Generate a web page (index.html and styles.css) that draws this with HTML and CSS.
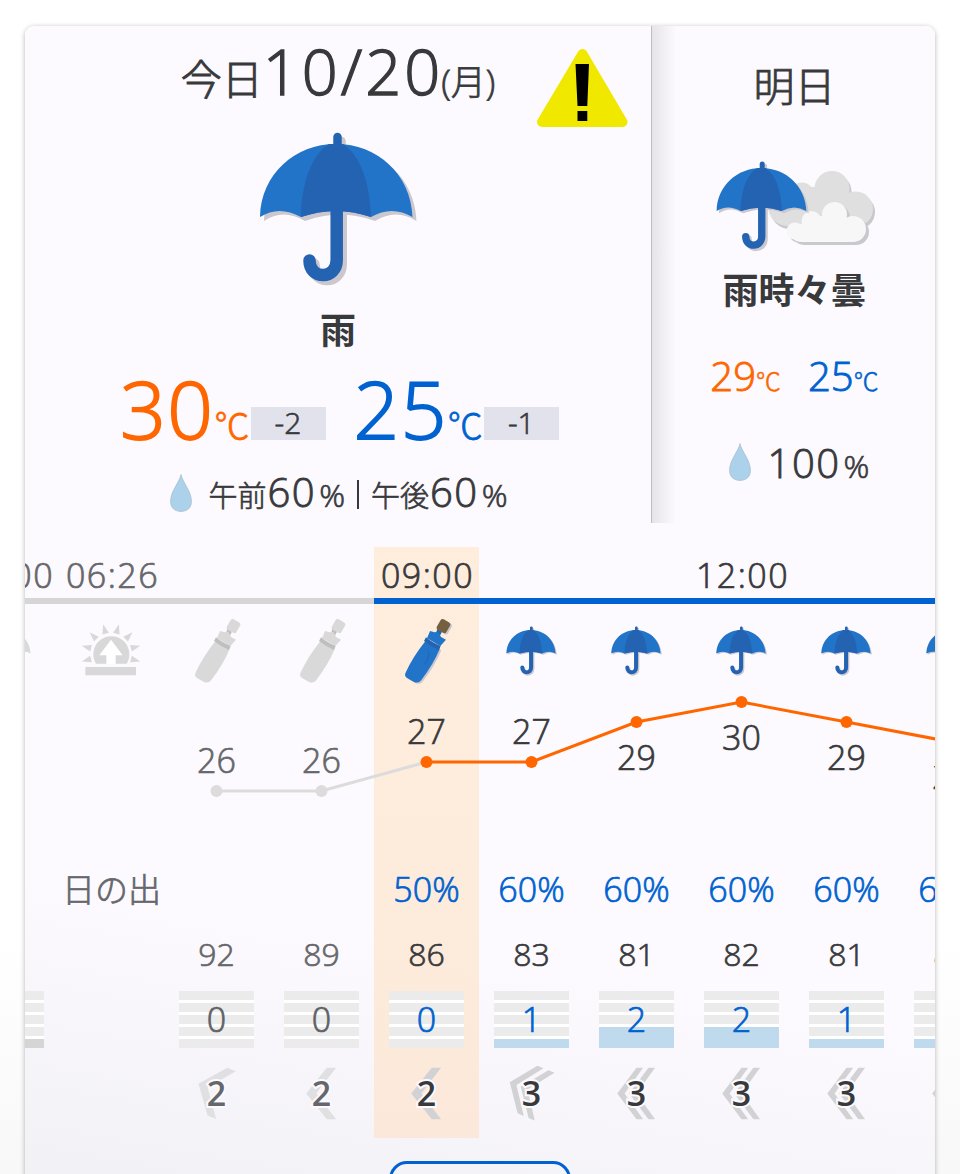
FILE: index.html
```html
<!DOCTYPE html>
<html lang="ja">
    <head>
        <meta charset="UTF-8">
        <title>今日・明日の天気</title>
        <link rel="stylesheet" href="styles.css">
    </head>
    <body>
        <svg class="defs">
            <symbol id="umbrella" viewBox="0 0 158 154">
                <g class="shade" transform="translate(4 4)">
                    <path d="M1 85C2 42 36 12 77 12S152 42 153.500 85Q133 72 112 85Q77 72 42 85Q20 72 1 85z"/>
                    <path class="stick" d="M78.500 16V5"/>
                    <path class="pole" d="M77.700 78V128C77.700 148 50.500 148 50.500 128.500"/>
                </g>
                <path class="canopy" d="M1 85C2 42 36 12 77 12S152 42 153.500 85Q133 73 112 85Q77 73 42 85Q20 73 1 85z"/>
                <path class="rib" d="M42 85C42 55 52 22 70 12H84C102 24 111 52 112 85Q77 73 42 85z"/>
                <path class="stick" d="M78.500 16V5"/>
                <path class="pole" d="M77.700 78V128C77.700 148 50.500 148 50.500 128.500"/>
            </symbol>
            <symbol id="folded" viewBox="120 230 159 210">
                <g class="shade" transform="translate(5 4)">
                    <path d="M136 399Q158 350 196 303L239 326Q220 372 184 419Q176 430 162 425L140 412Q133 408 136 399z"/>
                    <rect x="234" y="239" width="33" height="36" rx="7" transform="rotate(30 250 257)"/>
                </g>
                <path class="canopy" d="M136 399Q158 350 196 303L239 326Q220 372 184 419Q176 430 162 425L140 412Q133 408 136 399z"/>
                <path class="fold" d="M200 325Q213 340 191 374Q214 354 230 325Q218 348 201 362Q215 341 200 325z"/>
                <path class="rib" d="M232 266L246 274L238 289L227 281z"/>
                <path class="canopy" d="M210 272L224 276L235 274L243 290L258 298L241 317L201 294z"/>
                <path class="rib" d="M198 291Q215 306 242 317L237 329Q212 318 192 302z"/>
                <rect class="grip" x="234" y="239" width="33" height="36" rx="7" transform="rotate(30 250 257)"/>
            </symbol>
            <symbol id="drop" viewBox="0 0 22 38">
                <path d="M11 .5C13 9 21.500 17 21.500 27.500C21.500 34 17 37.500 11 37.500S.5 34 .5 27.500C.5 17 9 9 11 .5z"/>
            </symbol>
            <symbol id="wind1" viewBox="-80 -95 160 190">
                <path d="M-46 0L16-78H44L-16 0L44 78H16z"/>
            </symbol>
            <symbol id="wind2" viewBox="-80 -95 160 190">
                <path d="M-58 0L0-78H20L-36 0L20 78H0z"/>
                <path d="M-22 0L36-78H56L0 0L56 78H36z"/>
            </symbol>
        </svg>

        <div class="card">
            <div class="days">
                <section class="today">
                    <h2 class="date"><span class="label">今日</span><span class="num">10/20</span><span class="wday">(月)</span></h2>
                    <svg class="alert" viewBox="0 0 91 79">
                        <path class="alert-bg" d="M45.500 5L85.500 73H5z"/>
                        <path d="M38.500 15H52L50.300 57H40.500zM40.500 62H50.300V72H40.500z"/>
                    </svg>
                    <svg class="main-icon"><use href="#umbrella"/></svg>
                    <p class="weather">雨</p>
                    <div class="temps">
                        <span class="high">30</span><span class="unit high">℃</span><span class="diff">-2</span>
                        <span class="low">25</span><span class="unit low">℃</span><span class="diff">-1</span>
                    </div>
                    <div class="rain">
                        <svg class="drop"><use href="#drop"/></svg>
                        <span class="half">午前</span><span class="pct">60</span><span class="sign">%</span>
                        <span class="bar"></span>
                        <span class="half">午後</span><span class="pct">60</span><span class="sign">%</span>
                    </div>
                </section>
                <section class="tomorrow">
                    <h2 class="date">明日</h2>
                    <svg class="main-icon" viewBox="0 0 158 92">
                        <g class="cloud-shade" transform="translate(2 3)">
                            <circle cx="116" cy="27.500" r="17.500"/><circle cx="139.500" cy="48" r="17.500"/><circle cx="86" cy="33" r="11.500"/><circle cx="72" cy="45" r="20"/>
                            <path d="M86 26H116L140 65H72z"/>
                        </g>
                        <g class="cloud-back">
                            <circle cx="116" cy="27.500" r="17.500"/><circle cx="139.500" cy="48" r="17.500"/><circle cx="86" cy="33" r="11.500"/><circle cx="72" cy="45" r="20"/>
                            <path d="M86 26H116L140 65H72z"/>
                        </g>
                        <g class="cloud-shade" transform="translate(3 3)">
                            <circle cx="118.500" cy="53.500" r="12.500"/><circle cx="95.500" cy="60" r="10"/><circle cx="137" cy="68" r="13"/><circle cx="79" cy="70" r="8.500"/>
                            <path d="M79 68L95 55H125L137 81H86Q79 81 75 76z"/>
                        </g>
                        <g class="cloud-front">
                            <circle cx="118.500" cy="53.500" r="12.500"/><circle cx="95.500" cy="60" r="10"/><circle cx="137" cy="68" r="13"/><circle cx="79" cy="70" r="8.500"/>
                            <path d="M79 68L95 55H125L137 81H86Q79 81 75 76z"/>
                        </g>
                        <use href="#umbrella" width="93" height="90.600"/>
                    </svg>
                    <p class="weather">雨時々曇</p>
                    <div class="temps">
                        <span class="high">29</span><span class="unit high">℃</span>
                        <span class="low">25</span><span class="unit low">℃</span>
                    </div>
                    <div class="rain">
                        <svg class="drop"><use href="#drop"/></svg>
                        <span class="pct">100</span><span class="sign">%</span>
                    </div>
                </section>
            </div>

            <div class="hourly">
                <div class="row time">
                    <span class="past">06:00</span><span class="past">06:26</span><span></span><span></span><span>09:00</span><span></span><span></span><span>12:00</span><span></span><span></span>
                </div>
                <div class="row line">
                    <i class="past"></i><i class="past"></i><i class="past"></i><i class="past"></i><i></i><i></i><i></i><i></i><i></i><i></i>
                </div>
                <div class="row icons">
                    <span class="past"><svg class="umb"><use href="#umbrella"/></svg></span>
                    <span>
                        <svg class="sunrise" viewBox="243 245 180 162">
                            <path d="M288 370A54 54 0 1 1 380 370z"/>
                            <g transform="translate(333 340)">
                                <path d="M-10-62H10L0-91z" transform="rotate(15)"/>
                                <path d="M-10-62H10L0-91z" transform="rotate(45)"/>
                                <path d="M-10-62H10L0-91z" transform="rotate(75)"/>
                                <path d="M-10-62H10L0-91z" transform="rotate(105)"/>
                                <path d="M-10-62H10L0-91z" transform="rotate(-15)"/>
                                <path d="M-10-62H10L0-91z" transform="rotate(-45)"/>
                                <path d="M-10-62H10L0-91z" transform="rotate(-75)"/>
                                <path d="M-10-62H10L0-91z" transform="rotate(-105)"/>
                            </g>
                            <path d="M256 380H408V405H256z"/>
                            <path class="arrow" d="M333 298L368 345H347V371H319V345H298z"/>
                        </svg>
                    </span>
                    <span class="past"><svg class="fold-icon"><use href="#folded"/></svg></span>
                    <span class="past"><svg class="fold-icon"><use href="#folded"/></svg></span>
                    <span><svg class="fold-icon"><use href="#folded"/></svg></span>
                    <span><svg class="umb"><use href="#umbrella"/></svg></span>
                    <span><svg class="umb"><use href="#umbrella"/></svg></span>
                    <span><svg class="umb"><use href="#umbrella"/></svg></span>
                    <span><svg class="umb"><use href="#umbrella"/></svg></span>
                    <span><svg class="umb"><use href="#umbrella"/></svg></span>
                </div>
                <!-- 気温グラフ 1列=105 -->
                <svg class="chart" viewBox="0 0 1050 164">
                    <polyline class="old" points="262.500,97 367.500,97 472.500,68"/>
                    <g class="old"><circle cx="262.500" cy="97" r="6"/><circle cx="367.500" cy="97" r="6"/></g>
                    <polyline points="472.500,68 577.500,68 682.500,28 787.500,8 892.500,28 997.500,48"/>
                    <circle cx="472.500" cy="68" r="6"/><circle cx="577.500" cy="68" r="6"/><circle cx="682.500" cy="28" r="6"/><circle cx="787.500" cy="8" r="6"/><circle cx="892.500" cy="28" r="6"/><circle cx="997.500" cy="48" r="6"/>
                    <text class="past" x="262.500" y="79">26</text>
                    <text class="past" x="367.500" y="79">26</text>
                    <text x="472.500" y="50">27</text>
                    <text x="577.500" y="50">27</text>
                    <text x="682.500" y="76">29</text>
                    <text x="787.500" y="56">30</text>
                    <text x="892.500" y="76">29</text>
                    <text x="997.500" y="95">28</text>
                </svg>
                <div class="row prob">
                    <span></span><span class="past event">日の出</span><span></span><span></span><span>50%</span><span>60%</span><span>60%</span><span>60%</span><span>60%</span><span>60%</span>
                </div>
                <div class="row humid">
                    <span></span><span></span><span class="past">92</span><span class="past">89</span><span>86</span><span>83</span><span>81</span><span>82</span><span>81</span><span>80</span>
                </div>
                <div class="row fall">
                    <span class="past"><b class="lv1"></b></span><span></span>
                    <span class="past"><b>0</b></span><span class="past"><b>0</b></span><span><b>0</b></span><span><b class="lv1">1</b></span><span><b class="lv2">2</b></span><span><b class="lv2">2</b></span><span><b class="lv1">1</b></span><span><b class="lv1">1</b></span>
                </div>
                <div class="row wind">
                    <span></span><span></span>
                    <span class="past"><svg class="wnw"><use href="#wind1"/></svg><b>2</b></span>
                    <span class="past"><svg><use href="#wind1"/></svg><b>2</b></span>
                    <span><svg><use href="#wind1"/></svg><b>2</b></span>
                    <span><svg class="wnw"><use href="#wind2"/></svg><b>3</b></span>
                    <span><svg><use href="#wind2"/></svg><b>3</b></span>
                    <span><svg><use href="#wind2"/></svg><b>3</b></span>
                    <span><svg><use href="#wind2"/></svg><b>3</b></span>
                    <span><svg><use href="#wind2"/></svg><b>3</b></span>
                </div>
            </div>
            <div class="more"></div>
        </div>
    </body>
</html>
```
FILE: styles.css
```css
* {
    box-sizing:border-box;
    -webkit-text-stroke:.022em;
}
html {
    height:100%;
    overflow:hidden;
}
body {
    margin:0;
    height:1174px;
    padding:26px 25px 0;
    overflow:hidden;
    background:linear-gradient(#fff 940px, #f8f8f8);
    font-family:"Open Sans","Noto Sans CJK JP",sans-serif;
    font-weight:300;
    color:#38393b;
}
h2, p {
    margin:0;
    font-weight:inherit;
}
.defs {
    display:none;
}
.card {
    height:1200px;
    border-radius:9px;
    background:linear-gradient(10deg, #f1f0f5 2%, #fcfaff 26%);
    box-shadow:0 1px 5px rgba(0,0,0,.3);
    overflow:hidden;
}
.days {
    display:flex;
    height:497px;
}
.today, .tomorrow {
    display:flex;
    flex-direction:column;
    align-items:center;
}
.today {
    position:relative;
    width:626px;
}
.tomorrow {
    flex:1;
    padding-left:2px;
    border-left:1px solid #bfbdc2;
    background:linear-gradient(90deg, #e6e4e9, #fcfaff 24px);
}
.date, .temps, .rain {
    display:flex;
    align-items:baseline;
    white-space:nowrap;
}

/* アイコンの色 */
svg {
    --canopy:#2174c7;
    --rib:#2463b1;
    --shade:#cbc7cf;
    --grip:#75603f;
    --fold:#2068bb;
    display:block;
    flex:none;
}
.past svg {
    --canopy:#d9d9d9;
    --rib:#bfbfbf;
    --shade:none;
    --grip:#d9d9d9;
    --fold:#d9d9d9;
}
.past .umb {
    --rib:#d9d9d9;
}
.canopy { fill:var(--canopy); }
.rib { fill:var(--rib); }
.grip { fill:var(--grip); }
.fold { fill:var(--fold); }
.shade { fill:var(--shade); }
.stick, .pole {
    fill:none;
    stroke:var(--rib);
    stroke-width:8.500;
    stroke-linecap:round;
}
.pole {
    stroke-width:12.500;
}
.shade .stick, .shade .pole {
    stroke:var(--shade);
}
.drop {
    width:22px;
    height:38px;
    margin:0 16px 3px 0;
    fill:#acd1eb;
    stroke:#9aaebd;
    stroke-width:.5;
    align-self:center;
}
.cloud-shade { fill:#c9c8cd; }
.cloud-back { fill:#dfdfdf; }
.cloud-front { fill:#f7f7f7; }

/* 今日 */
.today .date {
    height:106px;
    line-height:90px;
}
.today .label { font-size:41px; }
.today .num {
    font-size:63px;
    letter-spacing:3px;
}
.today .wday {
    font-size:35px;
    margin-left:-2px;
}
.alert {
    position:absolute;
    left:512px;
    top:23px;
    width:91px;
    height:79px;
}
.alert-bg {
    fill:#f1e800;
    stroke:#f1e800;
    stroke-width:10;
    stroke-linejoin:round;
}
.today .main-icon {
    width:158px;
    height:154px;
}
.weather {
    font-weight:700;
    -webkit-text-stroke:0;
}
.today .weather {
    font-size:36px;
    line-height:50px;
    margin-top:20px;
}
.high { color:#ff6600; }
.low { color:#0062d0; }
.today .temps {
    height:92px;
    line-height:90px;
    margin-top:7px;
    padding-left:3px;
    font-size:80px;
}
.today .high, .today .low {
    letter-spacing:1.5px;
}
.today .unit {
    font-size:35px;
    letter-spacing:0;
}
.diff {
    align-self:flex-end;
    width:75px;
    height:33px;
    line-height:31px;
    font-size:30px;
    text-align:center;
    background:#e2e2ec;
    margin:0 28px 15px 1px;
}
.diff:last-child { margin-right:0; }
.rain {
    font-size:40px;
    line-height:50px;
}
.today .rain {
    margin-top:12px;
    padding-left:2px;
}
.today .half { font-size:29px; }
.pct {
    letter-spacing:1.5px;
    margin-left:1px;
}
.sign {
    font-size:32px;
    line-height:40px;
    margin-left:3px;
}
.today .sign { font-size:32px; }
.bar {
    width:2px;
    height:29px;
    margin:0 12px;
    align-self:center;
    background:#38393b;
}

/* 明日 */
.tomorrow .date {
    height:135px;
    line-height:120px;
    font-size:41px;
}
.tomorrow .main-icon {
    width:158px;
    height:92px;
    overflow:visible;
}
.tomorrow .weather {
    font-size:36px;
    line-height:50px;
    margin-top:13px;
}
.tomorrow .temps {
    font-size:40px;
    line-height:50px;
    margin-top:35px;
}
.tomorrow .unit { font-size:25px; }
.tomorrow .unit.high { margin-right:27px; }
.tomorrow .rain {
    margin-top:32px;
    padding-left:9px;
}

/* 1時間ごと */
.hourly {
    width:1050px;
    height:591px;
    margin:24px 0 0 -71px;
    background:linear-gradient(rgba(255,237,219,.96), rgba(252,229,210,.8)) 420px 0 / 105px 100% no-repeat;
}
.row {
    display:flex;
}
.row > * {
    flex:0 0 105px;
    display:flex;
    justify-content:center;
    align-items:center;
    white-space:nowrap;
}
.past { color:#66676a; }
.time {
    height:51px;
    font-size:34px;
    letter-spacing:1.5px;
    padding:4px 0 0 1px;
}
.line {
    height:6px;
}
.line i { background:#0062d0; }
.line .past { background:#d6d6d6; }
.icons {
    height:90px;
}
.icons > span {
    align-items:flex-start;
}
.umb {
    width:51px;
    height:50px;
    margin-top:22px;
}
.fold-icon {
    width:53px;
    height:70px;
    margin-top:13px;
}
.sunrise {
    width:60px;
    height:54px;
    margin:18px 2px 0 0;
    fill:#d8d8d8;
}
.arrow { fill:#fff; }
.chart {
    width:1050px;
    height:164px;
    fill:#ff6600;
}
.chart polyline {
    fill:none;
    stroke:#ff6600;
    stroke-width:3;
}
.chart .old { fill:#dcdcdc; }
.chart polyline.old {
    fill:none;
    stroke:#dcdcdc;
}
.chart text {
    font-size:34px;
    text-anchor:middle;
    fill:#38393b;
    stroke:#38393b;
    stroke-width:.7;
}
.chart text.past {
    fill:#66676a;
    stroke:#66676a;
}
.prob {
    height:61px;
    font-size:34px;
    color:#0062d0;
}
.event {
    font-size:33px;
    padding-bottom:2px;
}
.humid {
    height:72px;
    padding-bottom:4px;
    font-size:32px;
}
.fall b {
    width:75px;
    height:57px;
    line-height:56px;
    font-size:34px;
    font-weight:300;
    text-align:center;
    color:#0062d0;
    background:repeating-linear-gradient(#ebebeb 0 9px, #fff 9px 12px);
    --lv:#c0daed;
}
.fall .past b {
    color:#606164;
    --lv:#d5d5d5;
}
.fall .lv1 {
    background:linear-gradient(var(--lv), var(--lv)) bottom / 100% 9px no-repeat, repeating-linear-gradient(#ebebeb 0 9px, #fff 9px 12px);
}
.fall .lv2 {
    background:linear-gradient(var(--lv), var(--lv)) bottom / 100% 21px no-repeat, repeating-linear-gradient(#ebebeb 0 9px, #fff 9px 12px);
}
.wind {
    height:90px;
}
.wind > span {
    display:grid;
    place-items:center;
    place-content:center;
}
.wind svg, .wind b {
    grid-area:1 / 1;
}
.wind svg {
    width:53px;
    height:63px;
    overflow:visible;
    fill:#d2d2d4;
}
.wind .past svg { fill:#e0e0e2; }
.wind .wnw {
    transform:translate(-4px,-4px) rotate(22.5deg);
}
.wind b {
    z-index:1;
    font-size:34px;
    font-weight:600;
    paint-order:stroke;
    -webkit-text-stroke:4px #fcfaff;
}
.more {
    width:182px;
    height:60px;
    margin:23px auto 0;
    border:3px solid #0062d0;
    border-radius:18px;
}
```
